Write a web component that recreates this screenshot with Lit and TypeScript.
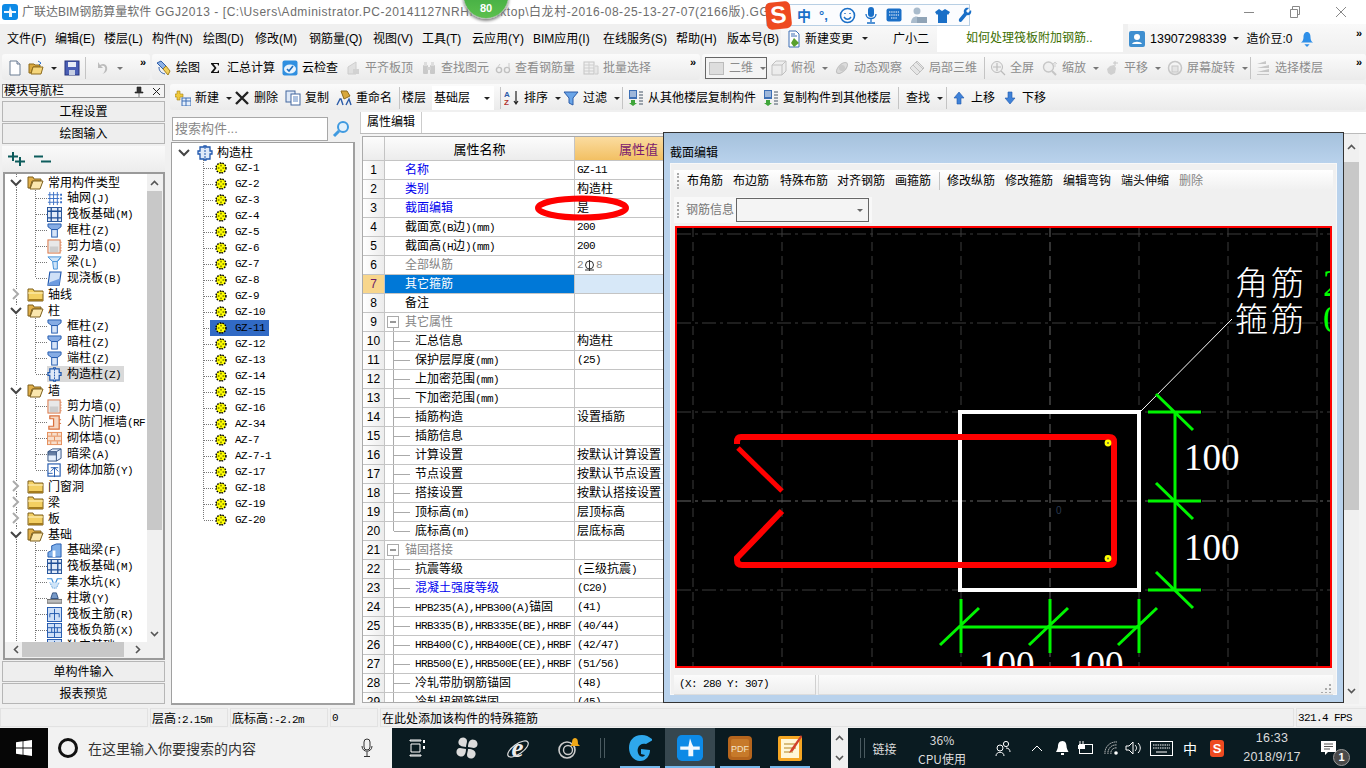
import { LitElement, css, html, svg } from "lit";
import { customElement } from "lit/decorators.js";

// SimSun look: latin is 6px wide, CJK 12px
const sim = (t: string) =>
  t.split(/([\u2E80-\uFFFF]+)/).map((s, i) => (i % 2 ? html`<span class="cjk">${s}</span>` : s));

const blue = "#1f57ad";
const I: Record<string, unknown> = {
  doc: html`<svg viewBox="0 0 16 16"><path d="M3 1h7l3 3v11H3z" fill="#fff" stroke="#6b7d92"/><path d="M10 1v3h3" fill="#dde" stroke="#6b7d92"/></svg>`,
  open: html`<svg viewBox="0 0 16 16"><path d="M1 13V4h5l1 1h5v2H5l-2 6z" fill="#d9a93f" stroke="#8d6b1c"/><path d="M3 14l2-7h10l-2 7z" fill="#f5d67c" stroke="#8d6b1c"/><path d="M10 1l3 2-2 2" fill="none" stroke="#2b6fc9"/></svg>`,
  save: html`<svg viewBox="0 0 16 16"><rect x="1" y="1" width="14" height="14" fill="#4a5fb5" stroke="#26357c"/><rect x="4" y="2" width="8" height="5" fill="#e8edf7"/><rect x="5" y="10" width="6" height="5" fill="#c7cfe3"/></svg>`,
  undo: html`<svg viewBox="0 0 16 16"><path d="M4 2v6h5l-2-2c3-1 5 1 4 4s-2 4-4 4c4 0 7-3 6-7-1-3-4-4-7-2z" fill="#bcbcbc"/></svg>`,
  draw: html`<svg viewBox="0 0 16 16"><path d="M1 3l4-2 5 5-3 3z" fill="#8fb2e4" stroke="#2c5ca8"/><path d="M7 9l3-3 4 5-2 4z" fill="#f1cf5c" stroke="#a37f1a"/><path d="M3 7c0 4 2 6 6 7" fill="none" stroke="#2c5ca8"/></svg>`,
  sigma: html`<svg viewBox="0 0 16 16"><path d="M4 3h8v2.500h-1L10.500 4H6.500l3 4-3 4h4l.5-1.500h1V13H4v-1l3.500-4L4 4z" fill="#111"/></svg>`,
  cloud: html`<svg viewBox="0 0 16 16"><rect x="0.5" y="0.5" width="15" height="15" rx="2" fill="#2f8fe0"/><ellipse cx="8" cy="9" rx="6" ry="4.5" fill="#e9f4fd"/><path d="M5 9l2 2 4-5" fill="none" stroke="#1f6fc0" stroke-width="1.6"/></svg>`,
  flat: html`<svg viewBox="0 0 16 16" opacity=".5"><path d="M3 14V7l8-5v12z" fill="#cfcfcf" stroke="#aaa"/><path d="M8 14V9h6v5z" fill="#b5b5b5"/></svg>`,
  bino: html`<svg viewBox="0 0 16 16" opacity=".55"><rect x="2" y="5" width="5" height="9" rx="1" fill="#aaa"/><rect x="9" y="5" width="5" height="9" rx="1" fill="#aaa"/><rect x="3" y="2" width="3" height="4" fill="#ccc"/><rect x="10" y="2" width="3" height="4" fill="#ccc"/><rect x="6" y="7" width="4" height="3" fill="#bbb"/></svg>`,
  glass: html`<svg viewBox="0 0 16 16" opacity=".55"><circle cx="4" cy="10" r="2.6" fill="none" stroke="#999" stroke-width="1.4"/><circle cx="12" cy="10" r="2.6" fill="none" stroke="#999" stroke-width="1.4"/><path d="M2 8l3-4M14 8V3" stroke="#aaa" fill="none"/></svg>`,
  batch: html`<svg viewBox="0 0 16 16" opacity=".5"><rect x="1" y="2" width="10" height="12" fill="#eee" stroke="#999"/><path d="M1 5h10M1 8h10M1 11h10M6 2v12" stroke="#aaa"/><path d="M12 6h3v8h-3" fill="#ddd" stroke="#aaa"/></svg>`,
  cube: html`<svg viewBox="0 0 16 16" opacity=".55"><path d="M1 5l4-4h10v10l-4 4H1z" fill="#e9e9e9" stroke="#999"/><path d="M1 5h10v10M11 5l4-4" fill="none" stroke="#999"/></svg>`,
  orbit: html`<svg viewBox="0 0 16 16" opacity=".55"><ellipse cx="8" cy="8" rx="7" ry="3.5" transform="rotate(-45 8 8)" fill="#c9c9c9" stroke="#999"/><circle cx="8" cy="8" r="3" fill="#aaa"/></svg>`,
  local: html`<svg viewBox="0 0 16 16" opacity=".55"><path d="M8 1l7 7-7 7-7-7z" fill="#ddd" stroke="#999"/><path d="M4 5l7 7M7 2l7 7" stroke="#999"/></svg>`,
  full: html`<svg viewBox="0 0 16 16" opacity=".6"><circle cx="7" cy="7" r="5.5" fill="#eee" stroke="#999"/><path d="M7 3v8M3 7h8M11 11l4 4" stroke="#999" stroke-width="1.2"/></svg>`,
  zoom: html`<svg viewBox="0 0 16 16" opacity=".6"><circle cx="6.5" cy="7" r="5" fill="#eee" stroke="#aaa" stroke-width="1.4"/><path d="M10 11l4 4" stroke="#aaa" stroke-width="2"/><path d="M13 2v5M11 4l2-2 2 2" stroke="#bbb" fill="none"/></svg>`,
  pan: html`<svg viewBox="0 0 16 16" opacity=".6"><path d="M3 9l3-3 4-1 2 3-1 5-4 2-3-2z" fill="#bbb"/><path d="M11 1v5M9 3h5" stroke="#aaa"/></svg>`,
  rotate: html`<svg viewBox="0 0 16 16" opacity=".6"><circle cx="8" cy="8" r="6.5" fill="none" stroke="#aaa" stroke-width="1.5"/><rect x="5" y="6" width="6" height="6" fill="#ddd" stroke="#aaa"/></svg>`,
  layers: html`<svg viewBox="0 0 16 16" opacity=".6"><path d="M2 4l9-3v3zM2 8l12-3v3zM2 12l12-3v3zM2 14h12v1H2z" fill="#aaa"/></svg>`,
  add: html`<svg viewBox="0 0 16 16"><path d="M2 1h3v3h3v3H5v3H2V7H0V4h2z" fill="#f0c93c" stroke="#a37f1a" stroke-width=".6"/><rect x="7" y="8" width="9" height="8" fill="#e4eefb" stroke="#3d6fb5"/><path d="M7 11h9M11 8v8" stroke="#3d6fb5"/></svg>`,
  del: html`<svg viewBox="0 0 16 16"><path d="M2 2l12 12M14 2L2 14" stroke="#222" stroke-width="2.4"/></svg>`,
  copy: html`<svg viewBox="0 0 16 16"><rect x="1" y="1" width="9" height="11" fill="#dfe9f7" stroke="#42679e"/><rect x="6" y="4" width="9" height="11" fill="#fff" stroke="#42679e"/><path d="M8 7h5M8 9h5M8 11h5" stroke="#5a84c0"/></svg>`,
  rename: html`<svg viewBox="0 0 16 16"><path d="M5 1l6 0 3 5-6 3z" fill="#d8a83c" stroke="#8d6b1c"/><path d="M1 15l3-6h1l2 6M10 15l3-6 2 6" fill="none" stroke="#2c5ca8" stroke-width="1.4"/></svg>`,
  sort: html`<svg viewBox="0 0 16 16"><text x="0" y="7" font-size="8" font-family="Liberation Sans" font-weight="700" fill="#2c5ca8">A</text><text x="0" y="15" font-size="8" font-family="Liberation Sans" font-weight="700" fill="#b2332e">Z</text><path d="M12 1v13M10 11l2 3 2-3" stroke="#222" fill="none" stroke-width="1.2"/></svg>`,
  funnel: html`<svg viewBox="0 0 16 16"><path d="M1 2h14l-5 6v7l-4-2V8z" fill="#6aa5e8" stroke="#2c5ca8"/></svg>`,
  from: html`<svg viewBox="0 0 16 16"><rect x="1" y="0" width="8" height="9" fill="#3d6fb5"/><path d="M2 2h6M2 4h6M2 6h6" stroke="#fff"/><path d="M3 10h4v3h2l-4 3-4-3h2z" fill="#3fa53a"/><path d="M11 2h4M11 5h4M11 8h4M11 11h4M11 14h4" stroke="#456"/></svg>`,
  up: html`<svg viewBox="0 0 16 16"><path d="M8 2l5 6h-3v6H6V8H3z" fill="#3f82d8" stroke="#1f57ad" stroke-width=".6"/></svg>`,
  down: html`<svg viewBox="0 0 16 16"><path d="M8 14L3 8h3V2h4v6h3z" fill="#3f82d8" stroke="#1f57ad" stroke-width=".6"/></svg>`,
  change: html`<svg viewBox="0 0 16 16"><path d="M3 0h7l3 3v13H3z" fill="#fff" stroke="#3d6fb5"/><path d="M5 3h4M5 5h6" stroke="#3d6fb5"/><path d="M8 7l5 5-5 4-3-4z" fill="#5aa02c"/></svg>`,
  user: html`<svg viewBox="0 0 16 16"><rect width="16" height="16" rx="2" fill="#3f8fd0"/><circle cx="8" cy="6" r="3" fill="#fff"/><path d="M3 13c1-3 9-3 10 0z" fill="#fff"/></svg>`,
  bell: html`<svg viewBox="0 0 16 18"><path d="M8 1c3 0 4 3 4 6s1 5 3 6H1c2-1 3-3 3-6s1-6 4-6z" fill="#2f8fe8"/><path d="M5 15h6l-3 3z" fill="#2f8fe8"/></svg>`,
  // tree icons
  column: html`<svg viewBox="0 0 16 16"><path d="M1 1h14v3l-4 3H5L1 4z" fill="#86ace4" stroke="${blue}"/><rect x="5" y="7" width="6" height="8" fill="#d6e4f8" stroke="${blue}"/></svg>`,
  grid: html`<svg viewBox="0 0 16 16"><path d="M1 4h12M1 8h12M1 12h12M3 1v14M7 1v14M11 1v14" stroke="#3a6fc4"/><path d="M15 3v10" stroke="#3a6fc4" stroke-dasharray="2 2" stroke-width="2"/></svg>`,
  raft: html`<svg viewBox="0 0 16 16"><rect x=".5" y=".5" width="15" height="15" fill="#e2ebf8" stroke="#1f4e96"/><path d="M4.5 1v14M11.5 1v14M1 4.5h14M1 11.5h14" stroke="#1f4e96" stroke-width="1.4"/></svg>`,
  wall: html`<svg viewBox="0 0 16 16"><rect x="1" y="1" width="13" height="14" fill="#e8e8e8" stroke="#d9703c"/><rect x="3" y="8" width="9" height="6" fill="#bbb" opacity=".6"/><path d="M15 3v10" stroke="#d9703c" stroke-dasharray="1 2"/></svg>`,
  beam: html`<svg viewBox="0 0 16 16"><path d="M1 2h14l-4 5v8H7l-1-8z" fill="#cfe4f8" stroke="#3f8fd8"/><path d="M6 7h5M11 7l4-5" stroke="#3f8fd8"/></svg>`,
  slab: html`<svg viewBox="0 0 16 16"><path d="M3 1h12l-2 14H1z" fill="#cfe0f7" stroke="${blue}" stroke-width="1.2"/><path d="M3 12l11-4-1 7H1z" fill="#6d9be0"/></svg>`,
  puzzle: html`<svg viewBox="0 0 16 16"><path d="M3 2h4V1h2v1h4v4h2v3h-2v5H9v1H7v-1H3V9H1V6h2z" fill="#dfe9f8" stroke="${blue}" stroke-width="1.3"/><path d="M8 2v12" stroke="${blue}" stroke-dasharray="2 1"/></svg>`,
  door: html`<svg viewBox="0 0 16 16"><path d="M3 1h10v14H2v-3h5V4H3z" fill="#f6d8c3" stroke="#d9703c" stroke-width="1.3"/><path d="M13 5h2M13 9h2" stroke="#d9703c"/></svg>`,
  brick: html`<svg viewBox="0 0 16 16"><rect x=".5" y="1.5" width="15" height="13" fill="#f7dfcd" stroke="#e48c57"/><path d="M1 5.5h14M1 10.5h14M5 2v3M11 2v3M8 6v4M4 11v3M11 11v3" stroke="#e48c57"/></svg>`,
  box: html`<svg viewBox="0 0 16 16"><path d="M1 5l5-3h9v10l-5 3H1z" fill="#e3eefb" stroke="#31507f"/><path d="M1 5h9v10M10 5l5-3" fill="none" stroke="#31507f"/><rect x="1" y="5" width="9" height="4" fill="#31507f" opacity=".7"/></svg>`,
  brace: html`<svg viewBox="0 0 16 16"><rect x="1" y="1" width="13" height="13" fill="#fff" stroke="${blue}" stroke-width="1.2"/><path d="M4 5h8M8 5v10M4 9l4-4 4 4M1 11h5" stroke="${blue}" fill="none"/></svg>`,
  fbeam: html`<svg viewBox="0 0 16 16"><path d="M1 15V10l4-2V3l5-2h5v14z" fill="#7eaee8" stroke="${blue}"/><rect x="6" y="8" width="3" height="7" fill="#fff"/></svg>`,
  pit: html`<svg viewBox="0 0 16 16"><path d="M0 4h5l2 5h2l2-5h5" fill="none" stroke="#3f8fd8" stroke-width="1.3"/><path d="M3 8l3 6h4l3-6" fill="#cfe4f8" stroke="#3f8fd8" stroke-dasharray="1 1"/></svg>`,
  pier: html`<svg viewBox="0 0 16 16"><path d="M6 2h4l2 6H4z" fill="#7799c7" stroke="#31507f"/><rect x="0" y="9" width="16" height="4" fill="#bbb" stroke="#666"/></svg>`,
  rmain: html`<svg viewBox="0 0 16 16"><rect x=".5" y=".5" width="15" height="15" fill="#cfe0f7" stroke="${blue}"/><path d="M8 2v12M3 7h10M3 7v4M13 7v4" stroke="${blue}" fill="none"/></svg>`,
  rneg: html`<svg viewBox="0 0 16 16"><rect x=".5" y=".5" width="15" height="15" fill="#cfe0f7" stroke="${blue}"/><path d="M1 5h14M1 10h14M5 5v5M11 5v5M8 1v14" stroke="${blue}" fill="none"/></svg>`,
  gz: html`<svg viewBox="0 0 12 12"><circle cx="6" cy="6" r="5" fill="#ff0"/><circle cx="6" cy="6" r="5" fill="none" stroke="#000" stroke-width="1.400" stroke-dasharray="1.600 1.100"/><path d="M1 6h10M6 1v10" stroke="#000" stroke-dasharray="1.200 1"/><circle cx="6" cy="6" r="1.200" fill="#ff0"/></svg>`,
  logo: html`<svg viewBox="0 0 16 16"><rect width="16" height="16" rx="3" fill="#0d8ae6"/><path d="M8 2c1 3 1 3 2 5h4v2h-4v4H7V9H2V7h5z" fill="#fff" opacity=".95"/></svg>`,
};

const caret = html`<i class="caret"></i>`;

interface Tool { i?: string; t?: string; w: number; c?: boolean; off?: boolean; sep?: number; }

const row2a: Tool[] = [
  { i: "doc", w: 21 }, { i: "open", w: 36, c: true }, { i: "save", w: 21 }, { sep: 8, w: 1 },
  { i: "undo", w: 31, c: true, off: true },
];
const row2b: Tool[] = [
  { i: "draw", t: "绘图", w: 51 }, { i: "sigma", t: "汇总计算", w: 75 }, { i: "cloud", t: "云检查", w: 63 },
  { i: "flat", t: "平齐板顶", w: 76, off: true }, { i: "bino", t: "查找图元", w: 74, off: true },
  { i: "glass", t: "查看钢筋量", w: 88, off: true }, { i: "batch", t: "批量选择", w: 70, off: true },
];
const row2c: Tool[] = [
  { i: "cube", t: "俯视", w: 63, c: true, off: true }, { i: "orbit", t: "动态观察", w: 75, off: true },
  { i: "local", t: "局部三维", w: 75, off: true }, { sep: 5, w: 1 },
  { i: "full", t: "全屏", w: 52, off: true }, { i: "zoom", t: "缩放", w: 62, c: true, off: true },
  { i: "pan", t: "平移", w: 63, c: true, off: true }, { i: "rotate", t: "屏幕旋转", w: 83, c: true, off: true }, { sep: 4, w: 1 },
  { i: "layers", t: "选择楼层", w: 70, off: true },
];
const row3a: Tool[] = [
  { i: "add", t: "新建", w: 59, c: true }, { i: "del", t: "删除", w: 51 }, { i: "copy", t: "复制", w: 51 },
  { i: "rename", t: "重命名", w: 63 }, { sep: 2, w: 1 },
];
const row3b: Tool[] = [
  { sep: 3, w: 1 }, { i: "sort", t: "排序", w: 59, c: true }, { i: "funnel", t: "过滤", w: 59, c: true }, { sep: 5, w: 1 },
  { i: "from", t: "从其他楼层复制构件", w: 135 }, { i: "from", t: "复制构件到其他楼层", w: 135 }, { sep: 7, w: 1 },
  { t: "查找", w: 40, c: true }, { sep: 4, w: 1 }, { i: "up", t: "上移", w: 51 }, { i: "down", t: "下移", w: 50 },
];

const menus: [string, number][] = [
  ["文件(F)", 48], ["编辑(E)", 49], ["楼层(L)", 48], ["构件(N)", 51], ["绘图(D)", 52], ["修改(M)", 54], ["钢筋量(Q)", 64],
  ["视图(V)", 49], ["工具(T)", 50], ["云应用(Y)", 61], ["BIM应用(I)", 70], ["在线服务(S)", 73], ["帮助(H)", 51], ["版本号(B)", 61],
];

type Node = [string, string, boolean?];
const tree: Node[] = [
  ["o", "常用构件类型"], ["grid", "轴网(J)"], ["raft", "筏板基础(M)"], ["column", "框柱(Z)"], ["wall", "剪力墙(Q)"], ["beam", "梁(L)"], ["slab", "现浇板(B)", true],
  ["c", "轴线"], ["o", "柱"], ["column", "框柱(Z)"], ["column", "暗柱(Z)"], ["column", "端柱(Z)"], ["puzzle", "构造柱(Z)", true],
  ["o", "墙"], ["wall", "剪力墙(Q)"], ["door", "人防门框墙(RF"], ["brick", "砌体墙(Q)"], ["box", "暗梁(A)"], ["brace", "砌体加筋(Y)", true],
  ["c", "门窗洞"], ["c", "梁"], ["c", "板"], ["o", "基础"], ["fbeam", "基础梁(F)"], ["raft", "筏板基础(M)"], ["pit", "集水坑(K)"], ["pier", "柱墩(Y)"], ["rmain", "筏板主筋(R)"], ["rneg", "筏板负筋(X)"], ["rmain", "独立基础(D)"],
];

const parts = ["GZ-1", "GZ-2", "GZ-3", "GZ-4", "GZ-5", "GZ-6", "GZ-7", "GZ-8", "GZ-9", "GZ-10", "GZ-11", "GZ-12", "GZ-13", "GZ-14", "GZ-15", "GZ-16", "AZ-34", "AZ-7", "AZ-7-1", "GZ-17", "GZ-18", "GZ-19", "GZ-20"];

// kind: n top row, b blue name, g grey, s selected, h group head, c child, l last child, cb blue child
const props: [string, string, string][] = [
  ["b", "名称", "GZ-11"], ["b", "类别", "构造柱"], ["b", "截面编辑", "是"], ["n", "截面宽(B边)(mm)", "200"], ["n", "截面高(H边)(mm)", "200"],
  ["g", "全部纵筋", "2⌀8"], ["s", "其它箍筋", ""], ["n", "备注", ""], ["h", "其它属性", ""], ["c", "汇总信息", "构造柱"], ["c", "保护层厚度(mm)", "(25)"],
  ["c", "上加密范围(mm)", ""], ["c", "下加密范围(mm)", ""], ["c", "插筋构造", "设置插筋"], ["c", "插筋信息", ""], ["c", "计算设置", "按默认计算设置"],
  ["c", "节点设置", "按默认节点设置"], ["c", "搭接设置", "按默认搭接设置"], ["c", "顶标高(m)", "层顶标高"], ["l", "底标高(m)", "层底标高"], ["h", "锚固搭接", ""],
  ["c", "抗震等级", "(三级抗震)"], ["cb", "混凝土强度等级", "(C20)"], ["c", "HPB235(A),HPB300(A)锚固", "(41)"], ["c", "HRB335(B),HRB335E(BE),HRBF", "(40/44)"],
  ["c", "HRB400(C),HRB400E(CE),HRBF", "(42/47)"], ["c", "HRB500(E),HRB500E(EE),HRBF", "(51/56)"], ["c", "冷轧带肋钢筋锚固", "(48)"], ["c", "冷轧扭钢筋锚固", "(45)"],
];

const dlgTools: [string, number][] = [["布角筋", 46], ["布边筋", 47], ["特殊布筋", 57], ["对齐钢筋", 58], ["画箍筋", 44]];
const dlgTools2: [string, number][] = [["修改纵筋", 58], ["修改箍筋", 58], ["编辑弯钩", 58], ["端头伸缩", 58]];

const statusCells: [string, number][] = [["", 148], ["层高:2.15m", 78], ["底标高:-2.2m", 98], ["0", 48], ["在此处添加该构件的特殊箍筋", 914], ["321.4 FPS", 72]];

const titleHead = "广联达BIM钢筋算量软件";
const titleRest = " GGJ2013 - [C:\\Users\\Administrator.PC-20141127NRHI\\Desktop\\白龙村-2016-08-25-13-27-07(2166版).GGJ12]";

// tray cells: width, content
const trayIcons: [number, unknown][] = [
  [36, html`<svg width="12" height="7" viewBox="0 0 12 7"><path d="M1 6l5-5 5 5" fill="none" stroke="#fff"/></svg>`],
  [14, html`<svg width="13" height="15" viewBox="0 0 13 15"><path d="M6.500 0c3 0 4 3 4 5s1 4 2 6H0c1-2 2-4 2-6s1-5 4.500-5zM5 12h3v2H5z" fill="#fff"/></svg>`],
  [34, html`<svg width="18" height="14" viewBox="0 0 18 14"><rect x="2.500" y="3.500" width="13" height="9" fill="none" stroke="#fff"/><path d="M3 0v6M6 0v6" stroke="#fff"/><rect x="1" y="4" width="7" height="4" fill="#fff"/></svg>`],
  [18, html`<svg width="16" height="14" viewBox="0 0 16 14"><path d="M1 13A11 11 0 0 1 13 1M4 13A8 8 0 0 1 13 4M7 13A5 5 0 0 1 13 7" fill="none" stroke="#c9c9c9" stroke-dasharray="1.500 .5"/><circle cx="12" cy="12" r="1.800" fill="#fff"/></svg>`],
  [24, html`<svg width="16" height="14" viewBox="0 0 16 14"><path d="M1 5h3l4-4v12l-4-4H1zM10 4c2 2 2 4 0 6M13 2c3 3 3 7 0 10" fill="none" stroke="#fff"/></svg>`],
  [32, html`<svg width="23" height="15" viewBox="0 0 23 15"><rect x=".5" y=".5" width="22" height="14" fill="none" stroke="#fff"/><path d="M3 4h17M3 7h17" stroke="#fff" stroke-dasharray="1.500 .8"/><path d="M6 11h11" stroke="#fff"/></svg>`],
  [26, html`<span class="zh">中</span>`],
  [28, html`<span class="s-mini">S</span>`],
];

@customElement("app-root")
export class AppRoot extends LitElement {
  static styles = css`
    :host { display: block; position: relative; width: 1366px; height: 768px; overflow: hidden; background: #f0f0f0;
      font: 12px/16px "Liberation Sans", "Noto Sans CJK SC", sans-serif; color: #000; }
    svg { display: block; flex: none; }
    .title { height: 24px; background: #fff; display: flex; align-items: center; color: #6d6d6d; white-space: nowrap; overflow: hidden; }
    .title svg { width: 16px; height: 16px; margin: 0 0 0 2px; }
    .title .head { flex: none; margin-left: 4px; }
    .title .rest { flex: none; letter-spacing: 0.55px; white-space: pre; }
    .winbtn { position: absolute; top: 6px; width: 12px; height: 12px; }
    .w1 { left: 1243px; } .w2 { left: 1289px; } .w3 { left: 1335px; }
    .badge { position: absolute; left: 463px; top: -27px; width: 44px; height: 44px; border-radius: 50%; background: linear-gradient(#2f9e3a, #5cc04e); border: 1px solid #a8bca8;
      box-shadow: 0 2px 3px #888; color: #fff; display: flex; align-items: flex-end; justify-content: center; font-weight: 700; font-size: 11px; line-height: 19px; }
    .sogou { position: absolute; left: 766px; top: 4px; width: 204px; height: 22px; background: #fbfcfe; border: 1px solid #b8cfe4; box-sizing: border-box; display: flex; align-items: center; padding-left: 30px; }
    .sogou svg { margin-right: 8px; }
    .sg-zh { color: #1a6fc7; font: 700 14px "Noto Sans CJK SC", sans-serif; margin-right: 8px; }
    .sg-pt { color: #1a6fc7; font: 700 13px "Liberation Sans", sans-serif; width: 20px; flex: none; }
    .s-logo { position: absolute; left: 766px; top: 2px; width: 25px; height: 27px; border-radius: 5px; background: #ee4a20; color: #fff; font: 700 24px/26px "Liberation Sans", sans-serif; text-align: center; transform: rotate(-6deg); }

    .menu { height: 28px; display: flex; align-items: center; }
    .menu .m { flex: none; padding: 1px 0 0 7px; box-sizing: border-box; white-space: nowrap; }
    .mstrip { height: 28px; display: flex; align-items: center; background: linear-gradient(#f9f9f9, #f0f0f0); padding-top: 1px; box-sizing: border-box; }
    .change { width: 112px; padding-left: 5px; gap: 3px; }
    .change svg { width: 16px; height: 18px; }
    .change .caret { margin-left: 6px; }
    .xiao { width: 44px; }
    .hint { width: 186px; height: 28px; background: #fff; color: #3b6e00; line-height: 29px; padding-left: 29px; box-sizing: border-box; white-space: nowrap; flex: none; }
    .acct { flex: 1; margin-left: 5px; padding-left: 1px; position: relative; }
    .acct > svg { width: 16px; height: 16px; }
    .phone { margin-left: 5px; font-size: 12.5px; }
    .acct .caret { margin: 0 7px; }
    .bellw { width: 14px; margin-left: 7px; }
    .bellw svg { width: 14px; height: 18px; }
    .acct .more { top: 3px; }

    .bar { height: 26px; display: flex; margin-top: 2px; }
    .strip { height: 26px; display: flex; align-items: center; background: linear-gradient(#fbfbfb, #ebebeb); border-radius: 3px; box-sizing: border-box; position: relative; flex: none; padding-top: 2px; }
    .s-a { width: 148px; margin-left: 2px; padding-left: 5px; }
    .s-b { width: 548px; margin-left: 2px; padding-left: 4px; }
    .s-c { flex: 1; margin-left: 2px; }
    .s-r { width: 100%; padding-left: 5px; }
    .more { position: absolute; right: 4px; top: 2px; font: 700 11px/12px "Liberation Sans", sans-serif; }
    .tool { flex: none; display: flex; align-items: center; gap: 4px; white-space: nowrap; height: 22px; position: relative; }
    .tool svg { width: 16px; height: 16px; }
    .tool.off { color: #8c8c8c; }
    .caret { flex: none; width: 0; height: 0; border: 3px solid transparent; border-top: 3px solid #222; border-bottom: 0; display: block; }
    .tool .caret { margin-left: 3px; }
    .tool.off .caret { border-top-color: #777; }
    .sep { flex: none; width: 1px; height: 22px; background: #c4c4c4; }
    .combo2 { flex: none; width: 62px; height: 22px; margin: 0 4px 0 3px; border: 1px solid #666; box-sizing: border-box; display: flex; align-items: center; color: #8c8c8c; gap: 5px; padding-left: 3px; background: #f4f4f4; }
    .combo2 b { width: 13px; height: 11px; background: #ddd; border: 1px solid #bbb; }
    .combo2 .caret { margin-left: 2px; border-top-color: #777; }
    .floor { flex: none; width: 30px; }
    .combo3 { flex: none; width: 62px; height: 24px; background: #fff; display: flex; align-items: center; padding: 0 4px 0 2px; box-sizing: border-box; justify-content: space-between; margin-right: 6px; }

    .work { height: 622px; margin-top: 4px; display: flex; }
    .nav { width: 170px; flex: none; display: flex; flex-direction: column; padding-left: 2px; box-sizing: border-box; }
    .navhead { height: 14px; width: 163px; border: 1px solid #8c8c8c; border-bottom-color: #999; box-sizing: border-box; display: flex; align-items: center; justify-content: space-between; font-size: 12px; line-height: 13px; position: relative; padding-left: 1px; background: #f4f4f4; }
    .navhead span:last-child { display: flex; gap: 8px; align-items: center; padding-right: 3px; }
    .navbtn { width: 163px; height: 21px; margin-top: 1px; background: #eee; border: 1px solid #b6b6b6; box-sizing: border-box; text-align: center; line-height: 20px; flex: none; font-size: 12px; }
    .navhead + .navbtn { margin-top: 3px; }
    .expand { width: 163px; height: 26px; margin-top: 2px; background: linear-gradient(#fafafa, #ececec); display: flex; align-items: center; gap: 9px; padding-left: 6px; box-sizing: border-box; flex: none; }
    .navbox { height: 488px; margin-left: 1px; box-sizing: border-box; border: 2px solid #9a9a9a; background: #f0f0f0; display: flex; flex-direction: column; flex: none; width: 162px; }
    .navtop { flex: 1; display: flex; min-height: 0; }
    .treeclip { width: 142px; overflow: hidden; background: #fff; flex: none; position: relative; }
    .vbar { width: 15px; flex: none; display: flex; flex-direction: column; align-items: center; background: #f0f0f0; justify-content: flex-start; }
    .thumb { background: #c8c8c8; }
    .vbar .thumb { width: 15px; height: 339px; flex: none; }
    .vbar .arr { height: 17px; display: flex; align-items: center; justify-content: center; flex: none; }
    .vbar .arr.end { margin-top: auto; }
    .hbar { height: 15px; margin-bottom: 1px; display: flex; align-items: center; flex: none; padding-left: 8px; }
    .hbar .thumb { height: 15px; width: 102px; margin: 0 11px 0 3px; }
    .navbox + .navbtn { margin-top: 1px; }

    .sim { font: 11px/16px "Liberation Mono", monospace; letter-spacing: -0.6px; white-space: nowrap; }
    .cjk { font: 12px/16px "Noto Sans CJK SC", sans-serif; letter-spacing: 0; }
    .tr { height: 16px; display: flex; align-items: center; white-space: nowrap; }
    .tr .gd { width: 42px; height: 16px; }
    .tr .ico { width: 15px; height: 15px; margin-right: 5px; flex: none; }
    .tr.fold .gd { width: 21px; }
    .tr.fold .ico { width: 17px; height: 15px; margin-right: 4px; margin-left: 1px; }
    .tr .hl { height: 16px; display: flex; align-items: center; }
    .tr.cur .hl { background: #d9d9d9; padding-right: 3px; }
    .tr.fold .name { font: 12px/16px "Noto Sans CJK SC", sans-serif; }

    .main { flex: 1; min-width: 0; display: flex; flex-direction: column; }
    .body { flex: 1; display: flex; min-height: 0; }
    .mid { width: 188px; flex: none; display: flex; flex-direction: column; padding: 7px 0 0 1px; box-sizing: border-box; }
    .search { display: flex; height: 24px; align-items: center; flex: none; margin-bottom: 1px; }
    .search .inp { width: 156px; height: 24px; margin-left: 1px; background: #fff; border: 1px solid #a8a8a8; box-sizing: border-box; color: #888; font-size: 13px; line-height: 22px; padding-left: 2px; }
    .search svg { width: 18px; height: 18px; margin-left: 4px; }
    .mtree { width: 184px; height: 563px; box-sizing: border-box; background: #fff; border: 2px solid #a0a0a0; border-width: 1px 2px 2px 1px; flex: none; padding-top: 1px; }
    .mtree .gd { width: 41px; height: 16px; }
    .mtree .ico { width: 12px; height: 12px; margin: 0 8px 0 2px; }
    .mtree .root .gd { width: 25px; }
    .mtree .root .ico { width: 16px; height: 15px; margin: 0 4px 0 0; }
    .mtree .hl { padding-right: 4px; }
    .mtree .sel .gd { margin-right: -3px; }
    .mtree .sel .hl { background: #316ac5; padding-left: 3px; }

    .right { flex: 1; min-width: 0; display: flex; flex-direction: column; padding-left: 2px; }
    .tabs { height: 22px; margin-top: 2px; display: flex; background: #fff; border-bottom: 1px solid #bbb; box-sizing: border-box; flex: none; }
    .tab { width: 60px; text-align: center; line-height: 21px; background: #fff; border-right: 1px solid #ccc; border-left: 1px solid #ccc; }
    .panel { flex: 1; display: flex; background: #f4f4f4; min-height: 0; }
    .gridwrap { flex: 1; margin: 2px 0 3px 2px; min-width: 0; overflow: hidden; background: #fff; border: 1px solid #aaa; border-width: 1px 0 1px 1px; }
    .grid { display: grid; grid-template-columns: 22px 190px 100px; grid-template-rows: 24px; grid-auto-rows: 19px; }
    .cell { border-right: 1px solid #c4c4c4; border-bottom: 1px solid #c4c4c4; box-sizing: border-box; display: flex; align-items: center; overflow: hidden; white-space: nowrap; }
    .cell.num { justify-content: center; background: linear-gradient(90deg, #fff, #ececec); font-size: 12px; }
    .cell.hd { background: linear-gradient(#fcfcfc, #ececec); justify-content: center; font: 13px/16px "Noto Sans CJK SC", sans-serif; }
    .cell.hdv { background: linear-gradient(#fbdca0, #f2c063); color: #7b1a6e; padding-left: 44px; justify-content: flex-start; }
    .cell .pad { width: 20px; flex: none; }
    .cell .gd { width: 30px; height: 19px; flex: none; }
    .cell .box { width: 20px; height: 19px; flex: none; }
    .cell.val { padding-left: 2px; }
    .rebar { display: flex; align-items: center; gap: 1px; }
    .blue { color: #0000ee; }
    .grey { color: #858585; }
    .rowsel { background: #0078d7; color: #fff; }
    .valsel { background: #d7e8f8; }
    .numsel.cell { background: #f8d68c; color: #6b1a66; }
    .vscroll { width: 15px; margin: 0 7px 2px 2px; background: #f0f0f0; flex: none; display: flex; flex-direction: column; align-items: center; position: relative; }
    .vscroll .thumb { width: 15px; height: 348px; margin-top: 28px; flex: none; }
    .vscroll svg { position: absolute; left: 3px; }
    .vscroll .au { top: 10px; }
    .vscroll .ad { bottom: 10px; }

    .ellipse { position: absolute; left: 533px; top: 194px; width: 98px; height: 28px; pointer-events: none; }
    .dlg { position: absolute; left: 663px; top: 132px; width: 681px; height: 571px; box-sizing: border-box; border: 1px solid #333; background: linear-gradient(#a5c1dc 0, #b9d2ec 30px); display: flex; flex-direction: column; padding: 0 6px 7px 6px; }
    .dlg .cap { height: 30px; flex: none; line-height: 40px; font-size: 12px; }
    .client { flex: 1; background: #f0f0f0; border: 1px solid #f8f8f8; display: flex; flex-direction: column; padding: 3px 3px 0 3px; min-height: 0; }
    .dtools { height: 20px; margin-top: 3px; padding: 2px 0 0 3px; background: linear-gradient(#fff, #f0f0f0); display: flex; align-items: center; flex: none; box-sizing: border-box; }
    .dtools .grip { width: 1px; height: 16px; border-left: 2px dotted #aaa; margin-right: 7px; flex: none; }
    .dtools .d { flex: none; white-space: nowrap; }
    .dtools .sep { height: 18px; margin-right: 7px; }
    .dtools2 { height: 26px; width: 198px; margin-top: 7px; display: flex; align-items: center; background: #f8f8f8; padding-left: 3px; box-sizing: border-box; flex: none; color: #777; }
    .dtools2 .grip { width: 1px; height: 16px; border-left: 2px dotted #aaa; margin-right: 6px; }
    .dcombo { width: 133px; height: 24px; margin-left: 2px; background: #f4f4f4; border: 1px solid #666; box-sizing: border-box; display: flex; align-items: center; justify-content: flex-end; padding-right: 5px; }
    .dcombo .caret { border-top-color: #666; }
    .canvas { height: 442px; margin: 3px 0 0 1px; border: 2px solid #f00; background: #000; box-sizing: border-box; flex: none; overflow: hidden; width: 657px; }
    .canvas svg { width: 653px; height: 438px; }
    .dstatus { height: 20px; margin-top: 7px; display: flex; flex: none; background: linear-gradient(#fbfbfb, #eee); position: relative; }
    .dstatus .a { width: 142px; line-height: 19px; padding-left: 5px; border-right: 1px solid #d0d0d0; flex: none; box-sizing: border-box; border-bottom: 1px solid #ddd; }
    .dstatus .b { flex: 1; margin-left: 2px; border-left: 1px solid #ddd; border-bottom: 1px solid #ddd; }
    .gripc { position: absolute; right: 2px; bottom: 2px; width: 10px; height: 10px; }

    .status { height: 19px; margin-top: 2px; display: flex; gap: 2px; }
    .status .sim { height: 19px; background: #f0f0f0; border: 1px solid #e2e2e2; box-sizing: border-box; padding-left: 1px; flex: none; line-height: 18px; }
    .status .cjk { line-height: 18px; }

    .task { position: absolute; left: 0; bottom: 0; width: 1366px; height: 40px; background: #0a1b21; display: flex; align-items: center; color: #ddd; }
    .start { width: 48px; height: 40px; background: #060606; display: flex; align-items: center; justify-content: center; flex: none; }
    .sbox { width: 344px; height: 40px; background: #f2f2f2; display: flex; align-items: center; color: #333; font: 14px/40px "Noto Sans CJK SC", sans-serif; flex: none; }
    .sbox .cort { width: 20px; height: 20px; border: 3px solid #111; border-radius: 50%; box-sizing: border-box; margin: 0 10px; flex: none; }
    .sbox .txt { width: 273px; flex: none; }
    .tk { flex: none; width: 50px; height: 40px; display: flex; align-items: center; justify-content: center; position: relative; box-sizing: border-box; }
    .tk.w51 { width: 51px; } .tk.w52 { width: 52px; }
    .tk.gap { width: 20px; justify-content: flex-start; padding-left: 5px; }
    .tk.run::after { content: ""; position: absolute; left: 5px; right: 5px; bottom: 0; height: 2px; background: #76b9ed; }
    .tk.act { background: #36474f; }
    .tk.act::after { left: 0; right: 0; }
    .tk.big svg { width: 26px; height: 26px; }
    .ie { width: 26px; height: 26px; position: relative; }
    .ie b { display: block; font: italic 700 27px/26px "Liberation Serif", serif; color: #eee; text-align: center; }
    .ie svg { position: absolute; left: 0; top: 0; }
    .arrows { flex: none; width: 17px; height: 40px; background: #f0f0f0; display: flex; flex-direction: column; align-items: center; justify-content: space-around; margin-left: 16px; }
    .tray { flex: none; display: flex; align-items: center; justify-content: center; height: 40px; }
    .vsep { width: 3px; height: 20px; border-left: 1px solid #4a5a60; border-right: 1px solid #4a5a60; flex: none; }
    .t-sep { width: 12px; margin-left: 8px; }
    .t-link { width: 33px; font: 12px "Noto Sans CJK SC", sans-serif; }
    .stack { text-align: center; font: 12px/19px "Noto Sans CJK SC", sans-serif; flex-direction: column; }
    .t-cpu { width: 60px; margin-left: 11px; padding-top: 1px; }
    .t-person { width: 32px; margin-left: 15px; }
    .zh { font: 14px "Noto Sans CJK SC", sans-serif; color: #fff; }
    .s-mini { display: block; width: 14px; height: 17px; background: #ee4a20; border-radius: 3px; color: #fff; font: 700 13px/17px "Liberation Sans", sans-serif; text-align: center; }
    .time { width: 82px; font: 12.5px/19px "Liberation Sans", sans-serif; letter-spacing: .2px; }
    .t-note { width: 30px; }
    .nb { position: absolute; left: 1333px; top: 749px; width: 15px; height: 15px; border-radius: 50%; background: #4a4a4a; border: 1px solid #9a9a9a; color: #fff; font: 700 11px/15px "Liberation Sans", sans-serif; text-align: center; }
  `;

  private tools(list: Tool[]) {
    return list.map((t) =>
      t.sep !== undefined
        ? html`<div class="sep" style="margin-right:${t.sep}px"></div>`
        : html`<div class="tool ${t.off ? "off" : ""}" style="width:${t.w}px">
            ${t.i ? I[t.i] : ""}${t.t ? html`<span>${t.t}</span>` : ""}${t.c ? caret : ""}
          </div>`
    );
  }

  private folder(open: boolean) {
    return open
      ? html`<svg class="ico" viewBox="0 0 17 15"><path d="M1 13V2h5l1 2h7v2H5l-2 7z" fill="#e2b04a" stroke="#7d5f1c"/><path d="M3 14l3-8h10l-3 8z" fill="#fbe7ae" stroke="#7d5f1c"/></svg>`
      : html`<svg class="ico" viewBox="0 0 17 15"><path d="M1 14V2h5l1 2h9v10z" fill="#f3cf62" stroke="#7d5f1c"/><path d="M1 6h15" stroke="#fff3c4"/><path d="M2 13h14" stroke="#a37b1e" stroke-width="2"/></svg>`;
  }

  private navTree() {
    return tree.map(([k, t, last]) => {
      if (k === "o" || k === "c") {
        return html`<div class="tr fold">
          <svg class="gd" viewBox="0 0 21 16">
            <path d="M11.500 0v3M11.500 13v3" stroke="#777" stroke-dasharray="1 1"/>
            <path d="${k === "o" ? "M6 6l5 5 5-5" : "M8 3l5 5-5 5"}" fill="none" stroke="${k === "o" ? "#444" : "#aaa"}" stroke-width="2"/>
          </svg>
          ${this.folder(k === "o")}<span class="name">${t}</span>
        </div>`;
      }
      const cur = t === "构造柱(Z)";
      return html`<div class="tr ${cur ? "cur" : ""}">
        <svg class="gd" viewBox="0 0 42 16">
          <path d="M11.500 0v16M30.500 0v${last ? 8 : 16}M31 8.500h11" stroke="#777" stroke-dasharray="1 1" fill="none"/>
        </svg>
        <span class="hl"><span class="ico">${I[k]}</span><span class="sim">${sim(t)}</span></span>
      </div>`;
    });
  }

  private midTree() {
    return html`<div class="tr root">
        <svg class="gd" viewBox="0 0 25 16"><path d="M7 6l5 5 5-5" fill="none" stroke="#444" stroke-width="2"/></svg>
        <span class="ico">${I.puzzle}</span><span class="cjk">构造柱</span>
      </div>
      ${parts.map(
        (p, i) => html`<div class="tr ${p === "GZ-11" ? "sel" : ""}">
          <svg class="gd" viewBox="0 0 41 16"><path d="M31.500 0v${i === parts.length - 1 ? 8 : 16}M32 8.500h9" stroke="#777" stroke-dasharray="1 1" fill="none"/></svg>
          <span class="hl"><span class="ico">${I.gz}</span><span class="sim">${p}</span></span>
        </div>`
      )}`;
  }

  private propRows() {
    return props.map(([k, name, val], i) => {
      const top = k === "b" || k === "n" || k === "g" || k === "s";
      const nameCls = k === "b" || k === "cb" ? "blue" : k === "g" || k === "h" ? "grey" : "";
      return html`
        <div class="cell num ${k === "s" ? "numsel" : ""}">${i + 1}</div>
        <div class="cell ${k === "s" ? "rowsel" : ""}">
          ${top ? html`<span class="pad"></span>` : ""}
          ${k === "h"
            ? html`<svg class="box" viewBox="0 0 20 19"><rect x="2.5" y="3.5" width="11" height="11" fill="#fff" stroke="#aaa"/><path d="M5 9h6" stroke="#333"/><path d="M8.5 15v4" stroke="#aaa"/></svg>`
            : ""}
          ${k === "c" || k === "l" || k === "cb"
            ? html`<svg class="gd" viewBox="0 0 30 19"><path d="M8.5 0v${k === "l" ? 9 : 19}M9 9.5h16" stroke="#aaa" fill="none"/></svg>`
            : ""}
          <span class="sim ${nameCls}">${sim(name)}</span>
        </div>
        <div class="cell val ${k === "s" ? "valsel" : ""}">
          ${val.includes("⌀")
            ? html`<span class="sim grey rebar">2<svg width="11" height="11" viewBox="0 0 11 11"><circle cx="5.5" cy="5" r="4" fill="none" stroke="#333"/><path d="M5.5 0v11M1 10h9" stroke="#333"/></svg>8</span>`
            : html`<span class="sim">${sim(val)}</span>`}
        </div>`;
    });
  }

  private canvas() {
    const vgrid = [693, 782, 872, 961, 1050, 1139, 1228, 1317];
    const hgrid = [234, 323, 412, 501, 590];
    const xTick = [961, 1050, 1139];
    const yTick = [412, 501, 590];
    const g = "#00f500";
    return html`<svg viewBox="677 228 653 438">
      ${vgrid.map((x) => svg`<path d="M${x} 228v438" stroke="${x === 1050 ? "#666" : "#3c3c3c"}" stroke-dasharray="9 5"/>`)}
      ${hgrid.map((y) => svg`<path d="M677 ${y}h653" stroke="${y === 501 ? "#666" : "#3c3c3c"}" stroke-dasharray="14 4 3 4"/>`)}
      <path d="M1141 411L1232 319" stroke="#fff" fill="none"/>
      <rect x="960" y="412" width="179" height="178" fill="none" stroke="#fff" stroke-width="4"/>
      <path d="M741 437H1109Q1114 437 1114 442V560Q1114 565 1109 565H742Q737 565 737 560V558L782 511" fill="none" stroke="#f00" stroke-width="6"/>
      <path d="M741 437Q737 437 737 442V444" fill="none" stroke="#f00" stroke-width="6"/>
      <path d="M738 448L782 491" fill="none" stroke="#f00" stroke-width="5"/>
      <circle cx="1108" cy="443" r="3.4" fill="#ff0"/><circle cx="1108" cy="443" r="1" fill="#664"/>
      <circle cx="1108" cy="558.5" r="3.4" fill="#ff0"/><circle cx="1108" cy="558.5" r="1" fill="#664"/>
      <text x="1056" y="514" font-size="10" fill="#2a3a50" font-family="Liberation Sans">0</text>
      <path d="M961 627H1139" stroke="${g}" stroke-width="3"/>
      ${xTick.map((x) => svg`<path d="M${x} 599v54M${x - 21} 645L${x + 18} 608" stroke="${g}" stroke-width="3"/>`)}
      <path d="M1175 412V590" stroke="${g}" stroke-width="3"/>
      ${yTick.map((y) => svg`<path d="M1148 ${y}h53M1156 ${y - 18}L1193 ${y + 18}" stroke="${g}" stroke-width="3"/>`)}
      <g fill="#fff" font-family="Liberation Serif" font-size="37">
        <text x="1184" y="470">100</text>
        <text x="1184" y="560">100</text>
        <text x="979" y="677">100</text>
        <text x="1068" y="677">100</text>
      </g>
      <g fill="#fff" font-family="Noto Sans CJK SC" font-size="33" font-weight="300">
        <text x="1235" y="295" letter-spacing="3">角筋</text>
        <text x="1235" y="331" letter-spacing="3">箍筋</text>
      </g>
      <g fill="#0f0" font-family="Liberation Serif" font-size="37">
        <text x="1323" y="296">2</text>
        <text x="1323" y="332">0</text>
      </g>
    </svg>`;
  }

  render() {
    return html`
      <div class="title">
        ${I.logo}
        <span class="head">${titleHead}</span><span class="rest">${titleRest}</span>
      </div>
      <div class="badge">80</div>
      <div class="sogou">
        <span class="sg-zh">中</span>
        <span class="sg-pt">°,</span>
        <svg width="17" height="17" viewBox="0 0 17 17"><circle cx="8.5" cy="8.5" r="7" fill="none" stroke="#1a6fc7" stroke-width="1.6"/><path d="M5 10c2 3 5 3 7 0M6 6v1M11 6v1" stroke="#1a6fc7" fill="none" stroke-width="1.4"/></svg>
        <svg width="14" height="18" viewBox="0 0 14 18"><rect x="4" y="1" width="6" height="10" rx="3" fill="#1a6fc7"/><path d="M2 8c0 6 10 6 10 0M7 13v3M3 17h8" stroke="#1a6fc7" fill="none" stroke-width="1.3"/></svg>
        <svg width="16" height="14" viewBox="0 0 16 14"><rect x=".5" y=".5" width="15" height="13" rx="2" fill="#1a6fc7"/><path d="M3 4h10M3 7h10M5 10h6" stroke="#fff" stroke-dasharray="1.4 .8"/></svg>
        <svg width="17" height="18" viewBox="0 0 17 18"><circle cx="7" cy="5" r="3.5" fill="#a9bbcc"/><path d="M1 17c0-8 9-8 9-3v3z" fill="#a9bbcc"/><rect x="7" y="11" width="10" height="6" fill="#8fa3b6"/></svg>
        <svg width="15" height="15" viewBox="0 0 15 15"><path d="M4 1l3 2 3-2 5 3-2 3-1-1v9H3V6L2 7 0 4z" fill="#1a6fc7"/></svg>
        <svg width="14" height="16" viewBox="0 0 14 16"><path d="M13 3l-3 3-2-2 3-3C8 0 5 2 6 6l-5 6c-1 3 2 4 3 2l5-6c3 1 5-2 4-5z" fill="#1a6fc7"/></svg>
      </div>
      <div class="s-logo">S</div>
      <svg class="winbtn w1" viewBox="0 0 12 12"><path d="M1 6.5h10" stroke="#888"/></svg>
      <svg class="winbtn w2" viewBox="0 0 12 12"><path d="M1.5 3.5h7v8h-7zM3.5 3V.5h7v8H9" fill="none" stroke="#888"/></svg>
      <svg class="winbtn w3" viewBox="0 0 12 12"><path d="M1 1l10 10M11 1L1 11" stroke="#888"/></svg>

      <div class="menu">
        ${menus.map(([t, w]) => html`<span class="m" style="width:${w}px">${t}</span>`)}
        <div class="mstrip change">${I.change}<span>新建变更</span>${caret}</div>
        <div class="mstrip xiao"><span>广小二</span></div>
        <div class="hint">如何处理筏板附加钢筋..</div>
        <div class="mstrip acct">
          ${I.user}<span class="phone">13907298339</span>${caret}
          <span>造价豆:0</span>
          <span class="bellw">${I.bell}</span>
          <span class="more">»</span>
        </div>
      </div>

      <div class="bar">
        <div class="strip s-a">${this.tools(row2a)}<span class="more">»</span></div>
        <div class="strip s-b">${this.tools(row2b)}<span class="more">»</span></div>
        <div class="strip s-c">
          <div class="combo2"><b></b><span>二维</span>${caret}</div>
          ${this.tools(row2c)}<span class="more">»</span>
        </div>
      </div>

      <div class="work">
        <div class="nav">
          <div class="navhead">
            <span>模块导航栏</span>
            <span>
              <svg width="10" height="11" viewBox="0 0 10 11"><path d="M3 1h4v5h2v1H1V6h2zM5 7v4" fill="#333" stroke="#222" stroke-width=".6"/></svg>
              <svg width="9" height="9" viewBox="0 0 9 9"><path d="M1 1l7 7M8 1L1 8" stroke="#222"/></svg>
            </span>
          </div>
          <div class="navbtn">工程设置</div>
          <div class="navbtn">绘图输入</div>
          <div class="expand">
            <svg width="17" height="14" viewBox="0 0 17 14"><path d="M0 4.5h10M5 0v9M7 9.5h10M12 5v9" stroke="#0d5c5c" stroke-width="2"/></svg>
            <svg width="17" height="14" viewBox="0 0 17 14"><path d="M0 4.5h9M7 9.5h10" stroke="#0d5c5c" stroke-width="2"/></svg>
          </div>
          <div class="navbox">
            <div class="navtop">
              <div class="treeclip">${this.navTree()}</div>
              <div class="vbar">
                <div class="arr"><svg width="9" height="6" viewBox="0 0 9 6"><path d="M1 5l3.5-3.5L8 5" fill="none" stroke="#555" stroke-width="1.6"/></svg></div>
                <div class="thumb"></div>
                <div class="arr end"><svg width="9" height="6" viewBox="0 0 9 6"><path d="M1 1l3.5 3.5L8 1" fill="none" stroke="#555" stroke-width="1.6"/></svg></div>
              </div>
            </div>
            <div class="hbar">
              <svg width="6" height="9" viewBox="0 0 6 9"><path d="M5 1L1.5 4.5 5 8" fill="none" stroke="#555" stroke-width="1.6"/></svg>
              <div class="thumb"></div>
              <svg width="6" height="9" viewBox="0 0 6 9"><path d="M1 1l3.5 3.5L1 8" fill="none" stroke="#555" stroke-width="1.6"/></svg>
            </div>
          </div>
          <div class="navbtn">单构件输入</div>
          <div class="navbtn">报表预览</div>
        </div>

        <div class="main">
          <div class="strip s-r">
            ${this.tools(row3a)}
            <span class="floor">楼层</span>
            <div class="combo3"><span>基础层</span>${caret}</div>
            ${this.tools(row3b)}
          </div>
          <div class="body">
            <div class="mid">
              <div class="search">
                <div class="inp">搜索构件...</div>
                <svg viewBox="0 0 18 18"><circle cx="11" cy="7" r="5" fill="#e3f1fc" stroke="#3f9ae0" stroke-width="2"/><path d="M7 11l-5 5" stroke="#3f9ae0" stroke-width="3"/></svg>
              </div>
              <div class="mtree">${this.midTree()}</div>
            </div>
            <div class="right">
              <div class="tabs"><div class="tab">属性编辑</div></div>
              <div class="panel">
                <div class="gridwrap">
                  <div class="grid">
                    <div class="cell hd"></div>
                    <div class="cell hd">属性名称</div>
                    <div class="cell hd hdv">属性值</div>
                    ${this.propRows()}
                  </div>
                </div>
                <div class="vscroll">
                  <svg class="au" width="9" height="6" viewBox="0 0 9 6"><path d="M1 5l3.5-3.5L8 5" fill="none" stroke="#555" stroke-width="1.6"/></svg>
                  <div class="thumb"></div>
                  <svg class="ad" width="9" height="6" viewBox="0 0 9 6"><path d="M1 1l3.5 3.5L8 1" fill="none" stroke="#555" stroke-width="1.6"/></svg>
                </div>
              </div>
            </div>
          </div>
        </div>
      </div>

      <div class="status">
        ${statusCells.map(([t, w]) => html`<div class="sim" style="width:${w}px">${sim(t)}</div>`)}
      </div>

      <svg class="ellipse" viewBox="0 0 98 28"><ellipse cx="49" cy="14" rx="44" ry="9.5" fill="none" stroke="#f00" stroke-width="6"/></svg>

      <div class="dlg">
        <div class="cap">截面编辑</div>
        <div class="client">
          <div class="dtools">
            <i class="grip"></i>
            ${dlgTools.map(([t, w]) => html`<span class="d" style="width:${w}px">${t}</span>`)}
            <i class="sep"></i>
            ${dlgTools2.map(([t, w]) => html`<span class="d" style="width:${w}px">${t}</span>`)}
            <span class="d grey">删除</span>
          </div>
          <div class="dtools2"><i class="grip"></i><span>钢筋信息</span><div class="dcombo">${caret}</div></div>
          <div class="canvas">${this.canvas()}</div>
          <div class="dstatus">
            <div class="a sim">(X: 280 Y: 307)</div><div class="b"></div>
            <svg class="gripc" viewBox="0 0 10 10"><path d="M8 1h2v2H8zM4 5h2v2H4zM8 5h2v2H8zM0 9h2v1H0zM4 9h2v1H4zM8 9h2v1H8z" fill="#aaa"/></svg>
          </div>
        </div>
      </div>

      <div class="task">
        <div class="start"><svg width="16" height="16" viewBox="0 0 16 16"><path d="M0 2.3l6.6-1v6.3H0zM7.4 1.2L16 0v7.600H7.4zM0 8.400h6.6v6.300l-6.6-1zM7.4 8.400H16V16l-8.600-1.200z" fill="#fff"/></svg></div>
        <div class="sbox">
          <i class="cort"></i><span class="txt">在这里输入你要搜索的内容</span>
          <svg width="12" height="20" viewBox="0 0 12 20"><rect x="3" y="1" width="6" height="11" rx="3" fill="none" stroke="#333"/><path d="M1 8c0 7 10 7 10 0M6 14v4M3 18.500h6" fill="none" stroke="#333"/></svg>
        </div>
        <div class="tk"><svg width="16" height="18" viewBox="0 0 16 18"><path d="M1 1h11v1H1zM2 5h9v8H2zM1 16h11v1H1z" fill="none" stroke="#fff"/><path d="M14 1h2v3h-2zM14 7h2v3h-2z" fill="#fff"/></svg></div>
        <div class="tk"><svg width="22" height="22" viewBox="0 0 22 22"><path d="M10 10C4 10 1 7 3 3s8-3 8 1c0 2-1 4-1 6zM12 10c0-6 3-9 7-7s3 8-1 8c-2 0-4-1-6-1zM12 12c6 0 9 3 7 7s-8 3-8-1c0-2 1-4 1-6zM10 12c0 6-3 9-7 7s-3-8 1-8c2 0 4 1 6 1z" fill="#dcdcdc"/></svg></div>
        <div class="tk w51"><div class="ie"><b>e</b><svg width="26" height="26" viewBox="0 0 26 26"><ellipse cx="13" cy="14" rx="12" ry="5" transform="rotate(-35 13 14)" fill="none" stroke="#ddd" stroke-width="1.200"/></svg></div></div>
        <div class="tk w52">
          <svg width="26" height="26" viewBox="0 0 26 26"><circle cx="11" cy="15" r="8" fill="none" stroke="#ccc" stroke-width="1.6"/><circle cx="12" cy="15" r="4.500" fill="none" stroke="#ccc" stroke-width="1.4"/><path d="M19 3c3 0 3 4 3 6l2 2H14l2-2c0-2 0-6 3-6z" fill="#f0a818"/></svg>
        </div>
        <div class="tk gap"><i class="vsep"></i></div>
        <div class="tk run"><svg width="24" height="28" viewBox="0 0 24 28"><path d="M14 1c-9 0-13 6-13 13s5 13 11 13 10-5 10-11l-9-1v5l4 1c-1 2-3 2-5 1-2-2-3-5-2-8s4-5 8-4l7-4c-3-3-7-5-11-5z" fill="#2fa8ec"/></svg></div>
        <div class="tk run act big">${I.logo}</div>
        <div class="tk run"><svg width="24" height="24" viewBox="0 0 24 24"><rect width="24" height="24" rx="4" fill="#b5651d"/><rect x="3" y="3" width="18" height="18" rx="2" fill="#c77a2a"/><text x="12" y="16" font-size="9" fill="#f4e4c8" text-anchor="middle" font-family="Liberation Sans">PDF</text></svg></div>
        <div class="tk run"><svg width="24" height="26" viewBox="0 0 24 26"><rect y="1" width="24" height="25" rx="2" fill="#f5a623"/><rect x="3" y="4" width="18" height="19" fill="#fff6d8"/><path d="M6 9h12M6 13h12M6 17h9" stroke="#b38420"/><path d="M23 0l-10 14-2 4 4-2L24 2z" fill="#d2402a"/></svg></div>
        <div class="arrows">
          <svg width="9" height="6" viewBox="0 0 9 6"><path d="M1 5l3.500-3.500L8 5" fill="none" stroke="#555" stroke-width="1.6"/></svg>
          <svg width="9" height="6" viewBox="0 0 9 6"><path d="M1 1l3.500 3.500L8 1" fill="none" stroke="#555" stroke-width="1.6"/></svg>
        </div>
        <div class="tray t-sep"><i class="vsep"></i></div>
        <div class="tray t-link">链接</div>
        <div class="tray stack t-cpu"><span>36%</span><span>CPU使用</span></div>
        <div class="tray t-person"><svg width="16" height="16" viewBox="0 0 16 16"><circle cx="5" cy="8" r="3" fill="none" stroke="#fff"/><path d="M1 16c0-5 8-5 8 0" fill="none" stroke="#fff"/><circle cx="11" cy="4" r="2.600" fill="none" stroke="#fff"/><path d="M11 8c3 0 4 2 4 4" fill="none" stroke="#fff"/></svg></div>
        ${trayIcons.map(([w, c]) => html`<div class="tray" style="width:${w}px">${c}</div>`)}
        <div class="tray stack time"><span>16:33</span><span>2018/9/17</span></div>
        <div class="tray t-note"><svg width="15" height="14" viewBox="0 0 15 14"><path d="M0 0h15v11H7l-3 3v-3H0z" fill="#fff"/><path d="M3 3h9M3 5.500h9M3 8h6" stroke="#555"/></svg></div>
      </div>
      <div class="nb">1</div>
    `;
  }
}

declare global {
  interface HTMLElementTagNameMap {
    "app-root": AppRoot;
  }
}
